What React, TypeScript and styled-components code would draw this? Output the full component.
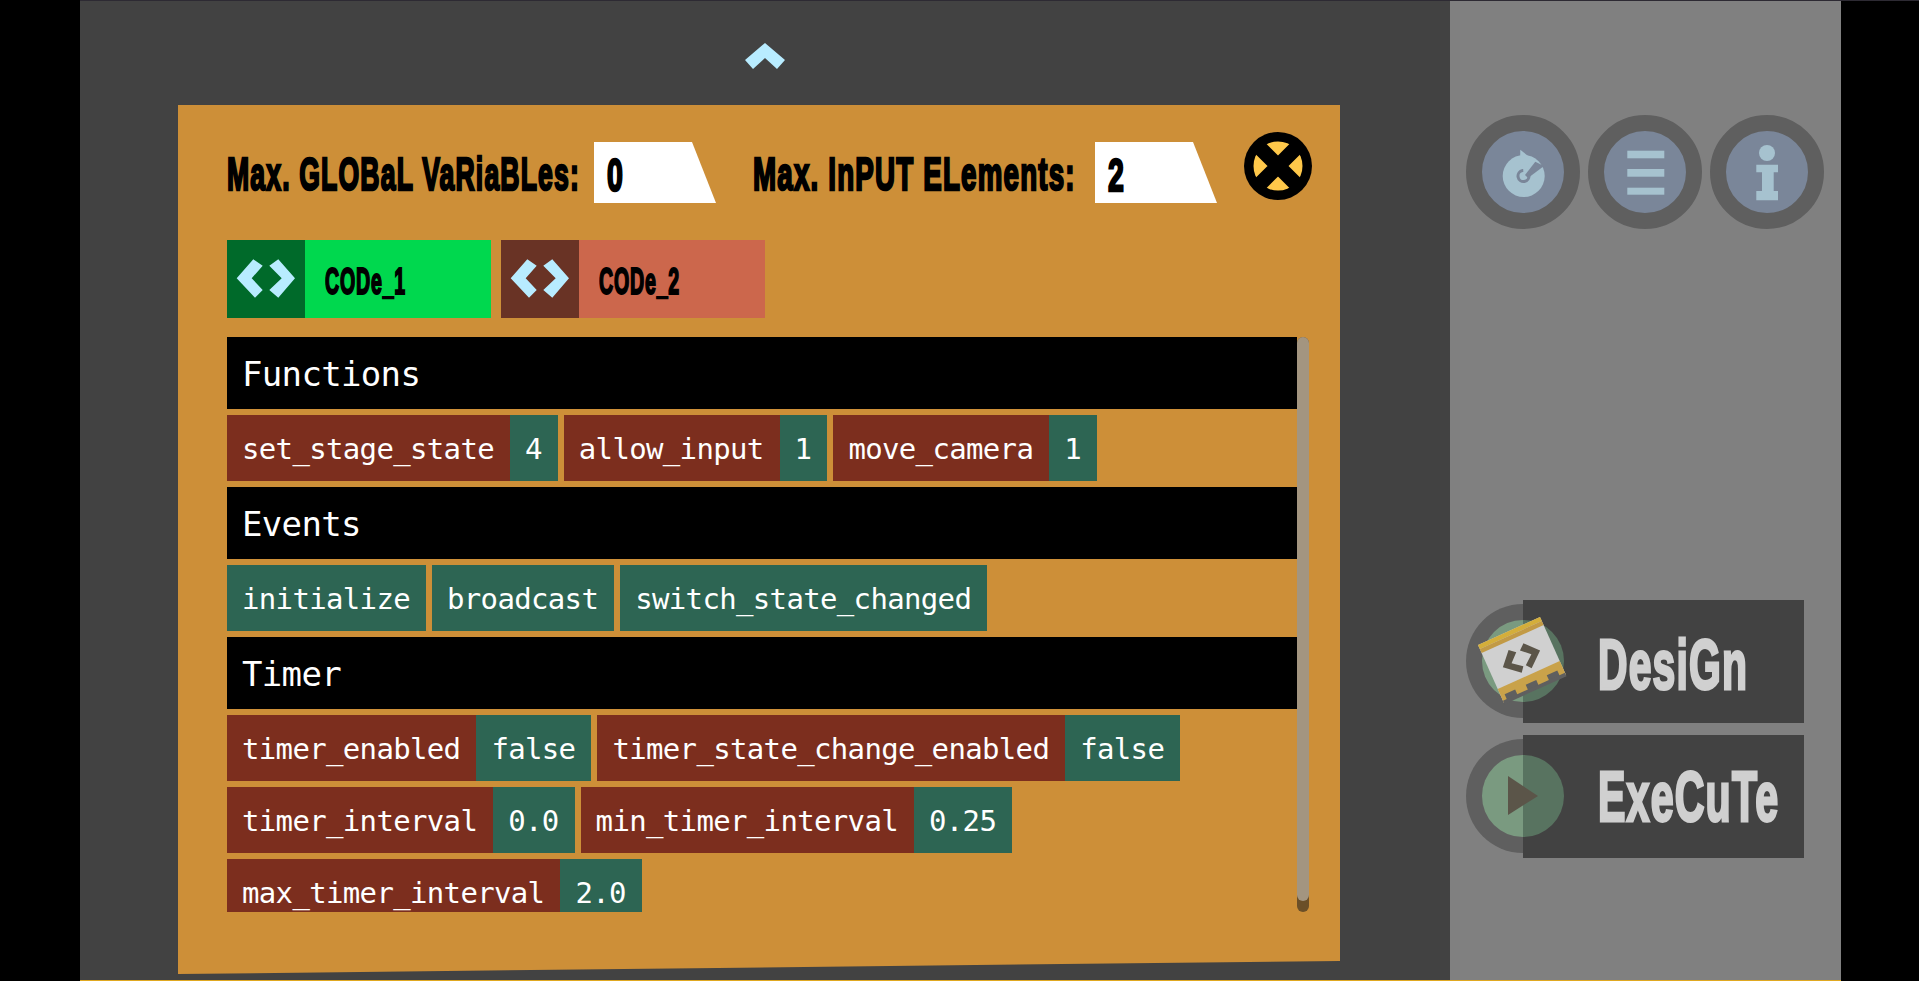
import React, {useLayoutEffect, useRef} from 'react';
import styled, {createGlobalStyle} from "styled-components";

const GlobalStyle = createGlobalStyle`
  html, body {
    margin: 0;
    padding: 0;
    background: #000;
    overflow: hidden;
  }

  * {
    box-sizing: border-box;
  }
`

const heavyFont = `"Liberation Sans", sans-serif`
const monoFont = `"DejaVu Sans Mono", monospace`

type ChipType = {
    name: string
    value?: string
}

type SectionType = {
    title: string
    tone: 'func' | 'event'
    chips: ChipType[]
}

const sections: SectionType[] = [
    {
        title: 'Functions',
        tone: 'func',
        chips: [
            {name: 'set_stage_state', value: '4'},
            {name: 'allow_input', value: '1'},
            {name: 'move_camera', value: '1'},
        ],
    },
    {
        title: 'Events',
        tone: 'event',
        chips: [
            {name: 'initialize'},
            {name: 'broadcast'},
            {name: 'switch_state_changed'},
        ],
    },
    {
        title: 'Timer',
        tone: 'func',
        chips: [
            {name: 'timer_enabled', value: 'false'},
            {name: 'timer_state_change_enabled', value: 'false'},
            {name: 'timer_interval', value: '0.0'},
            {name: 'min_timer_interval', value: '0.25'},
            {name: 'max_timer_interval', value: '2.0'},
        ],
    },
]

// no condensed font on the machine, so the text gets squeezed to the width it has in the game
const FitText = (props: { width: number, className?: string, children: string }) => {
    const ref = useRef<HTMLSpanElement>(null)

    useLayoutEffect(() => {
        const el = ref.current
        if (el) el.style.transform = `scaleX(${props.width / el.offsetWidth})`
    }, [props.width])

    return <span ref={ref} className={props.className}>{props.children}</span>
}

const CodeIcon = () => (
    <svg width="78" height="78" viewBox="0 0 78 78">
        <polygon fill="#b8ecff" points="9.7,38.3 26.3,19.3 35.7,25.7 24.7,38.3 35.7,50 28,57.7"/>
        <polygon fill="#b8ecff" points="51.3,19.3 68,38.3 51.3,57.7 42.3,50 54.7,38.3 42.3,25.7"/>
    </svg>
)

const RefreshIcon = () => (
    <svg width="82" height="82" viewBox="0 0 82 82">
        <circle cx="41.7" cy="45" r="21" fill="#a6c2cf"/>
        <polygon fill="#7a8699" points="43,44 53.3,30.7 62,35 46,47"/>
        <polygon fill="#a6c2cf" points="38.3,18.7 53.3,30.7 38,35"/>
        <circle cx="41.5" cy="45" r="5.5" fill="none" stroke="#7a8699" strokeWidth="3" strokeDasharray="26 9" transform="rotate(-10 41.5 45)"/>
    </svg>
)

const MenuIcon = () => (
    <svg width="82" height="82" viewBox="0 0 82 82">
        <rect x="23.3" y="19.7" width="37" height="7.6" fill="#a6c2cf"/>
        <rect x="23.3" y="38" width="37" height="7.7" fill="#a6c2cf"/>
        <rect x="23.3" y="56.7" width="37" height="7" fill="#a6c2cf"/>
    </svg>
)

const InfoIcon = () => (
    <svg width="82" height="82" viewBox="0 0 82 82">
        <circle cx="41" cy="22" r="8" fill="#a6c2cf"/>
        <polygon fill="#a6c2cf" points="30.3,33.7 52,33.7 52,41.3 47.7,41.3 47.7,60 52,60 52,69.3 30.3,69.3 30.3,60 36,60 36,41.3 30.3,41.3"/>
    </svg>
)

const ChipIcon = () => (
    <svg width="104" height="96" viewBox="0 0 104 96">
        <g transform="matrix(.62 -.28 .26 .58 8 33)">
            <rect x="0" y="0" width="100" height="100" fill="#d0d0d0"/>
            <rect x="0" y="0" width="100" height="7" fill="#d4ae3a"/>
            <rect x="0" y="7" width="100" height="7" fill="#c29a45"/>
            <rect x="0" y="76" width="100" height="24" fill="#c9a24a"/>
            <rect x="6" y="88" width="17" height="12" fill="#5f5f5f"/>
            <rect x="40" y="88" width="17" height="12" fill="#5f5f5f"/>
            <rect x="74" y="88" width="17" height="12" fill="#5f5f5f"/>
            <rect x="0" y="96" width="100" height="6" fill="#5f5f5f"/>
            <polygon fill="#5b5549" points="20,48 38,27 47,35 34,48 48,60 42,68"/>
            <polygon fill="#5b5549" points="80,48 62,27 53,35 66,48 52,60 58,68"/>
        </g>
    </svg>
)

const PlayIcon = () => (
    <svg width="82" height="82" viewBox="0 0 82 82">
        <polygon fill="#5b5549" points="26,21 56,41 26,60"/>
    </svg>
)

const App = () => {

    return (
        <>
            <GlobalStyle/>
            <Screen>
                <LeftBar/>
                <Stage>
                    <UpArrow width="40" height="26" viewBox="0 0 40 26">
                        <polygon fill="#b8ecff" points="20,0 40,17 32,26 20,15 8,26 0,17"/>
                    </UpArrow>
                    <Panel>
                        <LimitsRow>
                            <LimitLabel $width={353}>
                                <HeavyText width={353}>Max. GLOBaL VaRiaBLes:</HeavyText>
                            </LimitLabel>
                            <LimitInput>
                                <HeavyText width={17}>0</HeavyText>
                            </LimitInput>
                            <LimitLabel $width={323}>
                                <HeavyText width={323}>Max. InPUT ELements:</HeavyText>
                            </LimitLabel>
                            <LimitInput>
                                <HeavyText width={17}>2</HeavyText>
                            </LimitInput>
                            <CloseButton width="68" height="68" viewBox="0 0 68 68">
                                <circle cx="34" cy="34" r="34" fill="#000"/>
                                <circle cx="34" cy="34" r="24.5" fill="#ffc84a"/>
                                <path d="M14 14 L54 54 M54 14 L14 54" stroke="#000" strokeWidth="15"/>
                            </CloseButton>
                        </LimitsRow>
                        <TabsRow>
                            <Tab $bg="#00d84e" $iconBg="#006a2a">
                                <TabIcon><CodeIcon/></TabIcon>
                                <TabName width={81}>CODe_1</TabName>
                            </Tab>
                            <Tab $bg="#cc674c" $iconBg="#693325">
                                <TabIcon><CodeIcon/></TabIcon>
                                <TabName width={81}>CODe_2</TabName>
                            </Tab>
                        </TabsRow>
                        <ListFrame>
                            <List>
                                {sections.map(section => (
                                    <React.Fragment key={section.title}>
                                        <SectionTitle>{section.title}</SectionTitle>
                                        <ChipRow>
                                            {section.chips.map(chip => (
                                                <Chip key={chip.name}>
                                                    <ChipName $tone={section.tone}>{chip.name}</ChipName>
                                                    {chip.value && <ChipName $tone="event">{chip.value}</ChipName>}
                                                </Chip>
                                            ))}
                                        </ChipRow>
                                    </React.Fragment>
                                ))}
                            </List>
                            <ScrollTrack>
                                <ScrollThumb/>
                            </ScrollTrack>
                        </ListFrame>
                    </Panel>
                    <BottomEdge/>
                </Stage>
                <Side>
                    <RoundRow>
                        <RoundButton><RefreshIcon/></RoundButton>
                        <RoundButton><MenuIcon/></RoundButton>
                        <RoundButton><InfoIcon/></RoundButton>
                    </RoundRow>
                    <Actions>
                        <Action>
                            <ActionRing/>
                            <ActionLabel $shift={4}>
                                <ActionText width={150}>DesiGn</ActionText>
                            </ActionLabel>
                            <ActionDisc/>
                            <ChipHolder><ChipIcon/></ChipHolder>
                        </Action>
                        <Action>
                            <ActionRing/>
                            <ActionLabel $shift={1}>
                                <ActionText width={181}>ExeCuTe</ActionText>
                            </ActionLabel>
                            <ActionDisc><PlayIcon/></ActionDisc>
                        </Action>
                    </Actions>
                    <BottomEdge/>
                </Side>
                <RightBar/>
                <TopEdge/>
            </Screen>
        </>
    );
};

export default App;

const Screen = styled.div`
  position: relative;
  display: flex;
  width: 1919px;
  height: 981px;
  overflow: hidden;
  background: #000;
`

const TopEdge = styled.div`
  position: absolute;
  top: 0;
  left: 80px;
  right: 0;
  height: 1px;
  background: #2d2a33;
`

const BottomEdge = styled.div`
  position: absolute;
  bottom: 0;
  left: 0;
  width: 100%;
  height: 1px;
  background: #e0a820;
`

const LeftBar = styled.div`
  width: 80px;
  background: #000;
`

const RightBar = styled.div`
  width: 78px;
  background: #000;
`

const Stage = styled.div`
  position: relative;
  display: flex;
  flex-direction: column;
  align-items: flex-start;
  width: 1370px;
  padding: 43px 0 0 98px;
  background: #424242;
`

const UpArrow = styled.svg`
  display: block;
  margin-left: 567px;
`

const Panel = styled.div`
  width: 1162px;
  height: 869px;
  margin-top: 36px;
  padding: 37px 0 0 49px;
  background: #cd8f38;
  clip-path: polygon(0 0, 100% 0, 100% 856px, 0 100%);
`

const LimitsRow = styled.div`
  display: flex;
  align-items: center;
  height: 61px;
`

const LimitLabel = styled.div<{ $width: number }>`
  width: ${props => props.$width}px;
  margin-right: ${props => props.$width > 340 ? 14 : 19}px;
`

const HeavyText = styled(FitText)`
  display: inline-block;
  padding-top: 2px;
  font-family: ${heavyFont};
  font-weight: 700;
  font-size: 47px;
  letter-spacing: 2px;
  line-height: 61px;
  color: #000;
  white-space: nowrap;
  -webkit-text-stroke: 2.5px #000;
  transform-origin: left center;
`

const LimitInput = styled.div`
  width: 122px;
  height: 61px;
  margin-right: 37px;
  padding-left: 13px;
  background: #fff;
  clip-path: polygon(0 0, 98px 0, 100% 100%, 0 100%);

  &:nth-of-type(4) {
    margin-right: 27px;
  }
`

const CloseButton = styled.svg`
  display: block;
  flex-shrink: 0;
  margin-top: -13px;
`

const TabsRow = styled.div`
  display: flex;
  gap: 10px;
  margin-top: 37px;
`

const Tab = styled.div<{ $bg: string, $iconBg: string }>`
  display: flex;
  width: 264px;
  height: 78px;
  background: ${props => props.$bg};

  > div:first-child {
    background: ${props => props.$iconBg};
  }
`

const TabIcon = styled.div`
  width: 78px;
  height: 78px;

  svg {
    display: block;
  }
`

const TabName = styled(FitText)`
  display: inline-block;
  height: 78px;
  margin-left: 20px;
  padding-top: 3px;
  font-family: ${heavyFont};
  font-weight: 700;
  font-size: 36px;
  letter-spacing: 1.5px;
  line-height: 78px;
  color: #000;
  white-space: nowrap;
  -webkit-text-stroke: 2px #000;
  transform-origin: left center;
`

const ListFrame = styled.div`
  display: flex;
  width: 1082px;
  height: 575px;
  margin-top: 19px;
  overflow: hidden;
`

const List = styled.div`
  display: flex;
  flex-direction: column;
  flex-shrink: 0;
  gap: 6px;
  width: 1070px;
`

const SectionTitle = styled.div`
  flex-shrink: 0;
  height: 72px;
  padding: 1px 0 0 15px;
  background: #000;
  font-family: ${monoFont};
  font-size: 34px;
  letter-spacing: -0.67px;
  line-height: 72px;
  color: #fff;
`

const ChipRow = styled.div`
  display: flex;
  flex-wrap: wrap;
  flex-shrink: 0;
  gap: 6px;
`

const Chip = styled.div`
  display: flex;
  height: 66px;
`

const ChipName = styled.span<{ $tone: 'func' | 'event' }>`
  padding: 1px 16px 0 15px;
  background: ${props => props.$tone === 'func' ? '#7c2e1e' : '#2d6553'};
  font-family: ${monoFont};
  font-size: 29px;
  letter-spacing: -0.66px;
  line-height: 66px;
  color: #fff;
  white-space: pre;
`

const ScrollTrack = styled.div`
  width: 12px;
  height: 575px;
  border-radius: 6px;
  background: #6b4f28;
`

const ScrollThumb = styled.div`
  height: 564px;
  border-radius: 6px;
  background: #a39580;
`

const Side = styled.div`
  position: relative;
  width: 391px;
  padding: 115px 0 0 16px;
  background: #808080;
`

const RoundRow = styled.div`
  display: flex;
  gap: 8px;
`

const RoundButton = styled.div`
  display: flex;
  align-items: center;
  justify-content: center;
  width: 114px;
  height: 114px;
  border: 16px solid #5f5f5f;
  border-radius: 50%;
  background: #7a8699;

  svg {
    display: block;
    flex-shrink: 0;
  }
`

const Actions = styled.div`
  display: flex;
  flex-direction: column;
  gap: 12px;
  margin-top: 371px;
`

const Action = styled.div`
  position: relative;
  width: 338px;
  height: 123px;
  padding-left: 57px;
`

const ActionRing = styled.div`
  position: absolute;
  top: 4px;
  left: 0;
  width: 114px;
  height: 114px;
  border-radius: 50%;
  background: #5f5f5f;
`

const ActionLabel = styled.div<{ $shift: number }>`
  position: relative;
  width: 281px;
  height: 123px;
  padding: ${props => props.$shift}px 0 0 75px;
  background: #424242;
`

const ActionText = styled(FitText)`
  display: inline-block;
  font-family: ${heavyFont};
  font-weight: 700;
  font-size: 70px;
  letter-spacing: 2px;
  line-height: 122px;
  color: #d0d0d0;
  white-space: nowrap;
  -webkit-text-stroke: 3px #d0d0d0;
  transform-origin: left center;
`

const ActionDisc = styled.div`
  position: absolute;
  top: 20px;
  left: 16px;
  width: 82px;
  height: 82px;
  border-radius: 50%;
  background: linear-gradient(90deg, #7a9a80 50%, #587360 50%);

  svg {
    display: block;
  }
`

const ChipHolder = styled.div`
  position: absolute;
  top: 12px;
  left: 4px;

  svg {
    display: block;
  }
`
